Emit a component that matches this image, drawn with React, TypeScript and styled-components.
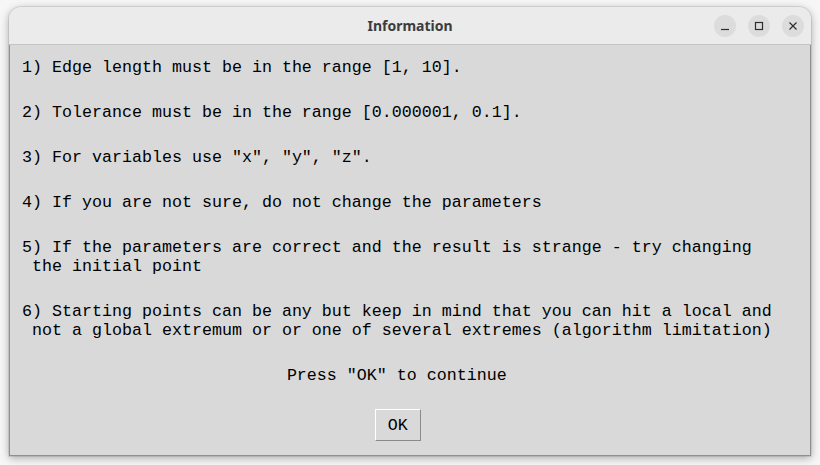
import React from "react";
import styled, { createGlobalStyle } from "styled-components";

const Global = createGlobalStyle`
  html, body { margin: 0; padding: 0; background: #f6f6f6; }
  #root { width: 820px; height: 465px; overflow: hidden; }
`;

const Screen = styled.div`
  width: 820px;
  height: 465px;
  padding: 7px 0 0 9px;
  box-sizing: border-box;
`;

const Window = styled.div`
  width: 802px;
  height: 449px;
  display: flex;
  flex-direction: column;
  border-radius: 12px 12px 0 0;
  box-shadow: 0 2px 9px rgba(0, 0, 0, 0.32), 0 0 0 1px rgba(0, 0, 0, 0.08);
  background: #d9d9d9;
`;

const TitleBar = styled.div`
  height: 37px;
  flex: none;
  display: flex;
  align-items: center;
  justify-content: flex-end;
  position: relative;
  background: #ebebeb;
  border-radius: 12px 12px 0 0;
  border-bottom: 1px solid #c4c4c4;
  padding-right: 7px;
  gap: 12px;
`;

const Title = styled.div`
  position: absolute;
  left: 0;
  right: 0;
  top: 0;
  bottom: 0;
  display: flex;
  align-items: center;
  justify-content: center;
  font-family: "Noto Sans", "DejaVu Sans", sans-serif;
  font-weight: 700;
  font-size: 14px;
  color: #3c3c3c;
  pointer-events: none;
`;

const WinButton = styled.button`
  position: relative;
  width: 22px;
  height: 22px;
  border-radius: 50%;
  border: none;
  padding: 0;
  background: #dcdcdc;
  display: flex;
  align-items: center;
  justify-content: center;
  color: #2e2e2e;
`;

const Body = styled.div`
  flex: 1;
  display: flex;
  flex-direction: column;
  align-items: flex-start;
  border: 1px solid #8f8f8f;
  border-top: none;
  padding: 13px 0 0 12px;
`;

const Column = styled.div`
  display: flex;
  flex-direction: column;
  align-items: flex-start;
  gap: 26px;
  font-family: "Liberation Mono", "DejaVu Sans Mono", monospace;
  font-size: 16.67px;
  line-height: 19px;
  color: #000;
`;

const Para = styled.div`
  white-space: pre;
`;

const Prompt = styled.div`
  align-self: center;
  white-space: pre;
`;

const OkButton = styled.button`
  align-self: center;
  margin: -2px 0 0 2px;
  width: 46px;
  height: 32px;
  box-sizing: border-box;
  background: #d9d9d9;
  border: 1px solid;
  border-color: #ffffff #8a8a8a #8a8a8a #ffffff;
  font-family: "Liberation Mono", "DejaVu Sans Mono", monospace;
  font-size: 16.67px;
  color: #000;
  padding: 0;
`;

const paragraphs = [
  "1) Edge length must be in the range [1, 10].",
  "2) Tolerance must be in the range [0.000001, 0.1].",
  '3) For variables use "x", "y", "z".',
  "4) If you are not sure, do not change the parameters",
  "5) If the parameters are correct and the result is strange - try changing\n the initial point",
  "6) Starting points can be any but keep in mind that you can hit a local and\n not a global extremum or or one of several extremes (algorithm limitation)",
];

export default function App() {
  return (
    <>
      <Global />
      <Screen>
        <Window>
          <TitleBar>
            <Title>Information</Title>
            <WinButton aria-label="minimize">
              <svg width="10" height="10" viewBox="0 0 10 10">
                <path d="M1 8.5h8" stroke="currentColor" strokeWidth="1.2" />
              </svg>
            </WinButton>
            <WinButton aria-label="maximize">
              <svg width="10" height="10" viewBox="0 0 10 10">
                <rect x="1.5" y="1.5" width="7" height="7" fill="none" stroke="currentColor" strokeWidth="1.2" />
              </svg>
            </WinButton>
            <WinButton aria-label="close">
              <svg width="10" height="10" viewBox="0 0 10 10">
                <path d="M1.5 1.5l7 7M8.5 1.5l-7 7" stroke="currentColor" strokeWidth="1.2" />
              </svg>
            </WinButton>
          </TitleBar>
          <Body>
            <Column>
              {paragraphs.map((p) => (
                <Para key={p}>{p}</Para>
              ))}
              <Prompt>Press "OK" to continue</Prompt>
              <OkButton>OK</OkButton>
            </Column>
          </Body>
        </Window>
      </Screen>
    </>
  );
}
